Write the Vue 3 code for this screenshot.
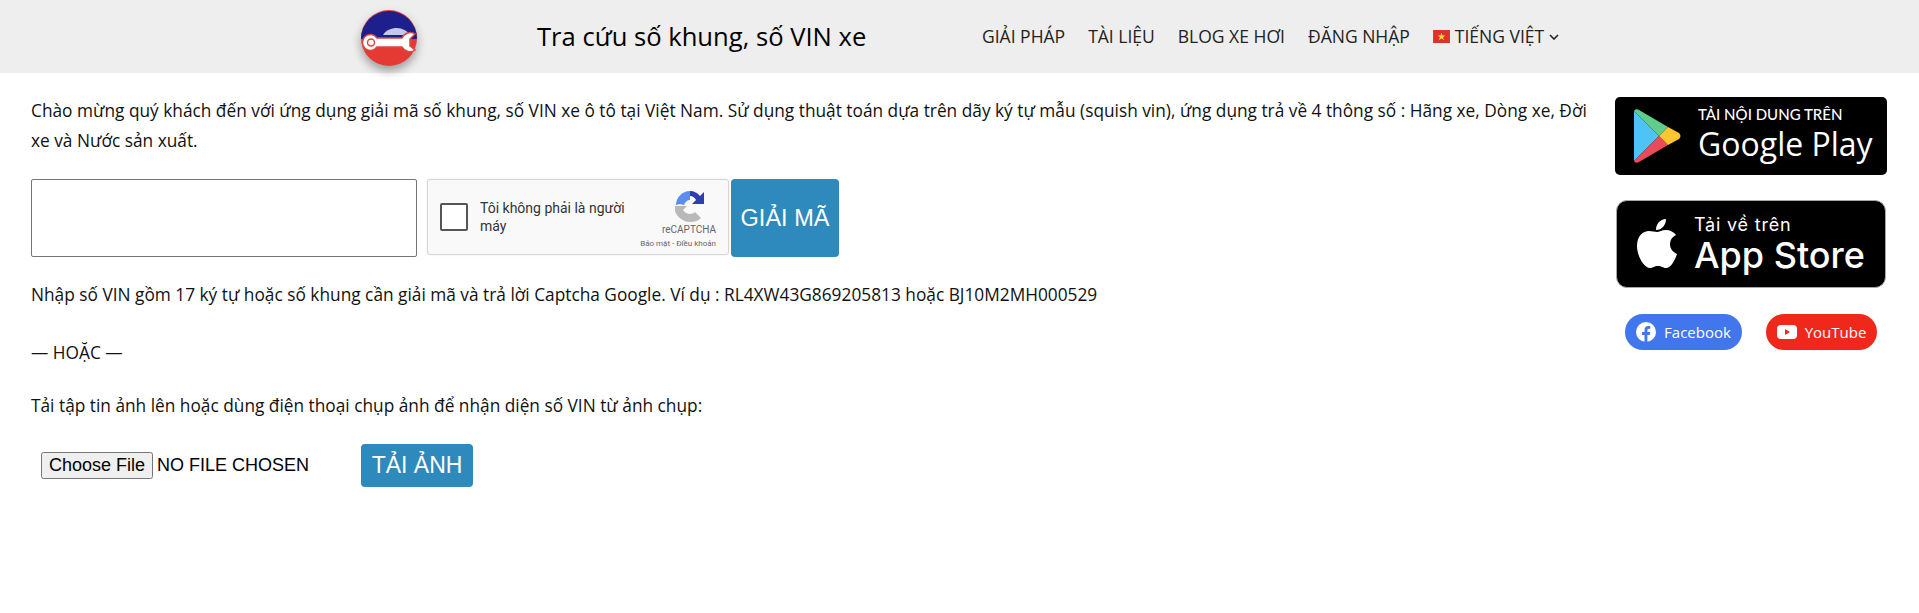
<template>
  <div class="app">
    <header class="topbar">
      <div class="logo-wrap">
        <svg class="logo" viewBox="0 0 56 56" width="56" height="56">
          <circle cx="28" cy="28" r="28" fill="#e53a33" />
          <path d="M0 29a28 28 0 0 1 56 0z" fill="#1c1f8c" />
          <path d="M22 25c3-5 8-7 14-7 5 0 10 3 14 7z" fill="#c3c9e6" />
          <path d="M16 28H41A9 9 0 0 1 54 24L49 29V36L54 40A9 9 0 0 1 41 37H16A8 8 0 1 1 16 28Z" fill="#fff" stroke="#d8473f" stroke-width="1.500" />
          <circle cx="10" cy="32.500" r="3.500" fill="#fff" stroke="#d8473f" stroke-width="1.500" />
        </svg>
      </div>
      <h1 class="title">Tra cứu số khung, số VIN xe</h1>
      <nav class="nav">
        <a>GIẢI PHÁP</a>
        <a>TÀI LIỆU</a>
        <a>BLOG XE HƠI</a>
        <a>ĐĂNG NHẬP</a>
        <a class="lang">
          <svg class="flag" viewBox="0 0 13 10" width="17" height="13">
            <rect width="13" height="10" fill="#e0322c" />
            <path d="M6.500 2l.8 2.200h2.200l-1.800 1.400.7 2.200-1.900-1.400-1.900 1.400.7-2.200-1.800-1.400h2.200z" fill="#ffd93b" />
          </svg>
          TIẾNG VIỆT
          <svg class="caret" viewBox="0 0 10 6" width="10" height="6">
            <path d="M1 1l4 4 4-4" fill="none" stroke="#222" stroke-width="1.600" />
          </svg>
        </a>
      </nav>
    </header>

    <main class="page">
      <section class="content">
        <p class="intro">Chào mừng quý khách đến với ứng dụng giải mã số khung, số VIN xe ô tô tại Việt Nam. Sử dụng thuật toán dựa trên dãy ký tự mẫu (squish vin), ứng dụng trả về 4 thông số : Hãng xe, Dòng xe, Đời<br />xe và Nước sản xuất.</p>

        <div class="vin-form">
          <input class="vin-input" type="text" />
          <div class="captcha">
            <span class="check"></span>
            <span class="captcha-label">Tôi không phải là người máy</span>
            <div class="captcha-brand">
              <svg viewBox="0 0 32 32" width="32" height="32">
                <path d="M16 1c4 0 8 2 10 5l4-4v12H18l4-4c-1-2-3-4-6-4z" fill="#2e3db0" />
                <path d="M2 15C2 8 8 1 16 1v9c-3 0-5 2-6 5l-4-1z" fill="#5a8df0" />
                <path d="M1 16h12l-4 4c1 2 4 4 7 4 2 0 4-1 5-2l6 6c-3 3-7 4-11 4-7 0-13-5-15-11z" fill="#b9b9b9" />
              </svg>
              <span class="brand-name">reCAPTCHA</span>
              <span class="brand-links">Bảo mật - Điều khoản</span>
            </div>
          </div>
          <button class="btn btn-decode">GIẢI MÃ</button>
        </div>

        <p class="hint">Nhập số VIN gồm 17 ký tự hoặc số khung cần giải mã và trả lời Captcha Google. Ví dụ : RL4XW43G869205813 hoặc BJ10M2MH000529</p>
        <p class="hint or">— HOẶC —</p>
        <p class="hint upload-hint">Tải tập tin ảnh lên hoặc dùng điện thoại chụp ảnh để nhận diện số VIN từ ảnh chụp:</p>

        <div class="upload">
          <input class="file" type="file" />
          <button class="btn btn-upload">TẢI ẢNH</button>
        </div>
      </section>

      <aside class="side">
        <a class="badge play">
          <svg class="play-icon" viewBox="0 0 48 54" width="48" height="54">
            <path d="M1 2v50l25-25z" fill="#4fc3f7" />
            <path d="M1 2c1-2 3-2 5-1l29 17-9 9z" fill="#5fce8a" />
            <path d="M1 52c1 2 3 2 5 1l29-17-9-9z" fill="#ea4a5a" />
            <path d="M35 18l11 6c2 2 2 4 0 6l-11 6-9-9z" fill="#fcc72e" />
          </svg>
          <div class="badge-text">
            <span class="play-top">TẢI NỘI DUNG TRÊN</span>
            <span class="play-name">Google Play</span>
          </div>
        </a>
        <a class="badge store">
          <svg class="apple" viewBox="0 0 41 50" width="41" height="50">
            <path d="M29 0c0 6-4 11-10 11 0-6 4-11 10-11zM20 13c2 0 5-2 9-2 4 0 8 2 10 5-4 2-6 5-6 9 0 5 3 8 7 10-2 6-6 14-11 14-3 0-4-2-8-2s-5 2-8 2C7 49 0 37 0 27 0 17 6 12 12 12c3 0 6 1 8 1z" fill="#fff" />
          </svg>
          <div class="badge-text">
            <span class="store-top">Tải về trên</span>
            <span class="store-name">App Store</span>
          </div>
        </a>
        <div class="social">
          <a class="pill fb">
            <svg viewBox="0 0 20 20" width="20" height="20">
              <circle cx="10" cy="10" r="10" fill="#fff" />
              <path d="M8.500 20v-7H6v-3h2.500V8c0-2.500 1.500-4 3.800-4 1 0 2 .2 2 .2v2.500H13c-1.200 0-1.600.8-1.600 1.500V10h2.800l-.5 3h-2.300v7z" fill="#4176ec" />
            </svg>
            Facebook
          </a>
          <a class="pill yt">
            <svg viewBox="0 0 20 14" width="20" height="14">
              <rect width="20" height="14" rx="4" fill="#fff" />
              <path d="M8 4l5 3-5 3z" fill="#f0281c" />
            </svg>
            YouTube
          </a>
        </div>
      </aside>
    </main>
  </div>
</template>

<script setup>
</script>

<style>
html, body { margin: 0; background: #fff; }
</style>

<style scoped>
.app { font-family: "Open Sans", "Noto Sans", sans-serif; color: #111; min-height: 613px; }

.topbar { height: 73px; background: #eee; display: flex; align-items: center; }
.logo-wrap { margin-left: 361px; height: 56px; width: 56px; margin-top: 2px; }
.logo { filter: drop-shadow(0 5px 5px rgba(0,0,0,.35)); display: block; }
.title { margin: 0 0 0 120px; width: 445px; font-size: 25.600px; font-weight: 400; color: #000; white-space: nowrap; }
.nav { display: flex; gap: 23px; font-size: 17.500px; color: #222; margin-bottom: 1px; }
.nav a { white-space: nowrap; }
.lang { display: flex; align-items: center; gap: 5px; }
.caret { margin-top: 2px; }

.page { display: grid; grid-template-columns: 1fr 305px; }
.content { padding: 23px 0 0 31px; }
p { margin: 0; font-size: 17.300px; line-height: 30px; }

.vin-form { display: flex; align-items: flex-start; margin-top: 23px; }
.vin-input { width: 386px; height: 78px; box-sizing: border-box; border: 1px solid #767676; border-radius: 2px; background: #fff; margin-right: 10px; }

.captcha { width: 302px; height: 76px; box-sizing: border-box; background: #f9f9f9; border: 1px solid #d6d6d6; border-radius: 3px; display: flex; align-items: center; font-family: Roboto, sans-serif; position: relative; box-shadow: 0 0 3px rgba(0,0,0,.08); }
.check { width: 24px; height: 24px; margin-left: 12px; flex: none; background: #fff; border: 2px solid #555; border-radius: 2px; }
.captcha-label { margin-left: 12px; width: 152px; font-size: 14px; line-height: 18px; color: #333; }
.captcha-brand { position: absolute; top: 10px; right: 12px; display: flex; flex-direction: column; align-items: flex-end; }
.captcha-brand svg { margin-right: 10px; }
.brand-name { font-size: 10px; color: #666; margin-top: 2px; line-height: 12px; }
.brand-links { font-size: 8px; color: #666; margin-top: 3px; line-height: 10px; }

.btn { background: #2e89bc; color: #fff; border: none; border-radius: 4px; font-family: "Liberation Sans", Arial, sans-serif; padding: 0; }
.btn-decode { width: 108px; height: 78px; margin-left: 2px; font-size: 23.500px; }
.vin-form + .hint { margin-top: 23px; }
.or { margin-top: 28px; }
.upload-hint { margin-top: 23px; }

.upload { display: flex; align-items: center; margin-top: 23px; padding-left: 10px; }
.file { width: 320px; font-family: "Liberation Sans", Arial, sans-serif; font-size: 18px; text-transform: uppercase; color: #000; }
.btn-upload { width: 112px; height: 43px; font-size: 23px; }

.side { display: flex; flex-direction: column; align-items: flex-start; padding-top: 24px; }
.badge { display: flex; align-items: center; background: #000; color: #fff; box-sizing: border-box; }
.badge-text { display: flex; flex-direction: column; }
.play { width: 272px; height: 78px; margin-left: 1px; border-radius: 5px; padding-left: 18px; }
.play-icon { flex: none; }
.play .badge-text { margin-left: 17px; }
.play-top { font-size: 15px; line-height: 18px; font-family: Lato, sans-serif; font-weight: 500; margin-top: -3px; }
.play-name { font-size: 32px; line-height: 42px; font-family: "Open Sans", sans-serif; font-weight: 500; white-space: nowrap; }
.store { width: 270px; height: 88px; margin-top: 25px; margin-left: 2px; border-radius: 11px; border: 1px solid #a6a6a6; padding-left: 20px; }
.store .badge-text { margin-left: 16px; }
.store-top { font-size: 18px; line-height: 20px; font-family: Inter, sans-serif; letter-spacing: .8px; margin-top: 2px; }
.store-name { font-size: 36px; line-height: 40px; font-family: Inter, sans-serif; font-weight: 500; white-space: nowrap; }
.social { display: flex; gap: 24px; margin-top: 26px; margin-left: 11px; }
.pill { height: 36px; border-radius: 18px; color: #fff; display: flex; align-items: center; justify-content: center; gap: 8px; font-size: 15px; box-sizing: border-box; }
.fb { width: 117px; background: #4176ec; }
.yt { width: 111px; background: #f0281c; }
</style>
